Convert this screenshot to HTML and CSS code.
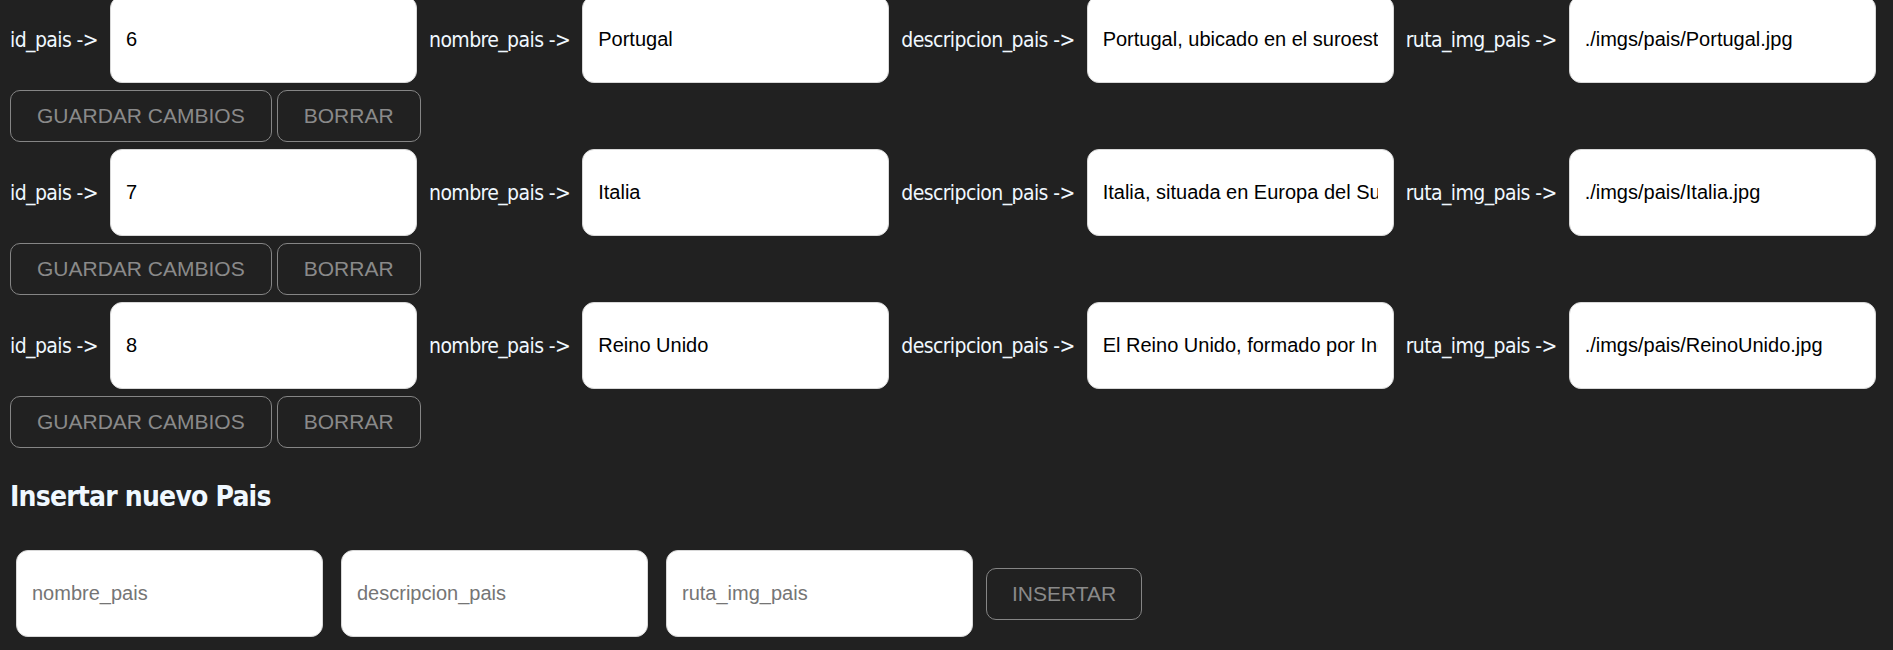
FILE: index.html
```html
<!DOCTYPE html>
<html lang="es">
<head>
<meta charset="utf-8">
<title>Paises</title>
<link rel="stylesheet" href="styles.css">
</head>
<body>
<div class="rows">
  <form class="row">
    <div class="fields">
      <label class="lbl">id_pais -&gt;</label><input class="field" type="text" value="6">
      <label class="lbl">nombre_pais -&gt;</label><input class="field" type="text" value="Portugal">
      <label class="lbl">descripcion_pais -&gt;</label><input class="field" type="text" value="Portugal, ubicado en el suroeste de Europa, es conocido por su rica historia marítima.">
      <label class="lbl">ruta_img_pais -&gt;</label><input class="field" type="text" value="./imgs/pais/Portugal.jpg">
    </div>
    <div class="actions">
      <button class="btn" type="button">GUARDAR CAMBIOS</button>
      <button class="btn" type="button">BORRAR</button>
    </div>
  </form>
  <form class="row">
    <div class="fields">
      <label class="lbl">id_pais -&gt;</label><input class="field" type="text" value="7">
      <label class="lbl">nombre_pais -&gt;</label><input class="field" type="text" value="Italia">
      <label class="lbl">descripcion_pais -&gt;</label><input class="field" type="text" value="Italia, situada en Europa del Sur, es famosa por su arte, su cocina y su historia.">
      <label class="lbl">ruta_img_pais -&gt;</label><input class="field" type="text" value="./imgs/pais/Italia.jpg">
    </div>
    <div class="actions">
      <button class="btn" type="button">GUARDAR CAMBIOS</button>
      <button class="btn" type="button">BORRAR</button>
    </div>
  </form>
  <form class="row">
    <div class="fields">
      <label class="lbl">id_pais -&gt;</label><input class="field" type="text" value="8">
      <label class="lbl">nombre_pais -&gt;</label><input class="field" type="text" value="Reino Unido">
      <label class="lbl">descripcion_pais -&gt;</label><input class="field" type="text" value="El Reino Unido, formado por Inglaterra, Escocia, Gales e Irlanda del Norte.">
      <label class="lbl">ruta_img_pais -&gt;</label><input class="field" type="text" value="./imgs/pais/ReinoUnido.jpg">
    </div>
    <div class="actions">
      <button class="btn" type="button">GUARDAR CAMBIOS</button>
      <button class="btn" type="button">BORRAR</button>
    </div>
  </form>
</div>
<h2 class="title">Insertar nuevo Pais</h2>
<form class="insert">
  <input class="field" type="text" placeholder="nombre_pais">
  <input class="field" type="text" placeholder="descripcion_pais">
  <input class="field" type="text" placeholder="ruta_img_pais">
  <button class="btn btn-insert" type="button">INSERTAR</button>
</form>
</body>
</html>
```
FILE: styles.css
```css
html, body {
  background: #212121;
}
body {
  margin: 0;
  padding: 8px;
  font-family: "Liberation Sans", Arial, sans-serif;
  overflow: hidden;
}
.rows {
  margin-top: -12px;
  display: flex;
  flex-direction: column;
}
.row {
  display: flex;
  flex-direction: column;
  gap: 7px;
  padding-bottom: 7px;
  margin: 0;
}
.fields {
  display: flex;
  align-items: center;
  gap: 12px;
  padding-left: 2px;
}
.lbl {
  flex: none;
  font-family: "DejaVu Sans Condensed", "DejaVu Sans", sans-serif;
  font-stretch: condensed;
  font-size: 21px;
  letter-spacing: -0.6px;
  color: #f0f8ff;
}
.field {
  flex: none;
  box-sizing: border-box;
  width: 307px;
  height: 87px;
  margin: 0;
  padding: 0 15px;
  border: 1px solid #d8d8d8;
  border-radius: 12px;
  background: #fff;
  color: #000;
  font-family: "Liberation Sans", Arial, sans-serif;
  font-size: 20px;
  outline: none;
}
.field::placeholder {
  color: #757575;
}
.actions {
  display: flex;
  gap: 5px;
  padding-left: 2px;
}
.btn {
  box-sizing: border-box;
  height: 52px;
  margin: 0;
  padding: 0 26px;
  background: transparent;
  border: 1px solid #858585;
  border-radius: 10px;
  color: #8a8a8a;
  font-family: "Liberation Sans", Arial, sans-serif;
  font-size: 21px;
  line-height: 24px;
}
.title {
  margin: 24px 0 0 2px;
  font-family: "DejaVu Sans Condensed", "DejaVu Sans", sans-serif;
  font-stretch: condensed;
  font-weight: bold;
  font-size: 28px;
  line-height: 36px;
  letter-spacing: -0.8px;
  color: #f0f8ff;
}
.insert {
  display: flex;
  align-items: center;
  gap: 18px;
  margin-top: 35px;
  padding-left: 8px;
}
.btn-insert {
  margin-left: -5px;
  padding: 0 25px;
}
```
